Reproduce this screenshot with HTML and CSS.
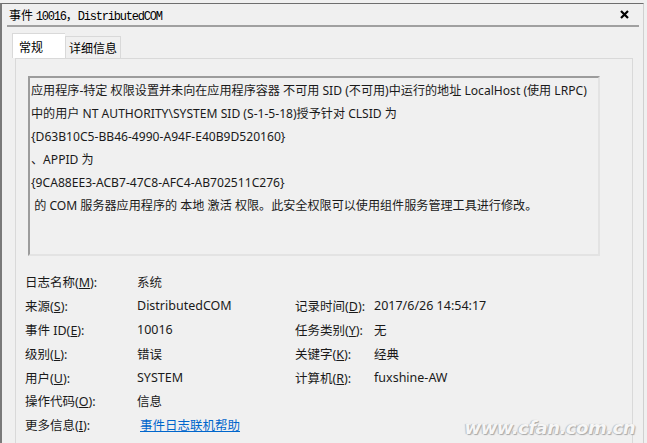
FILE: index.html
```html
<!DOCTYPE html>
<html>
<head>
    <title>事件 10016，DistributedCOM</title>
    <link rel="stylesheet" href="styles.css">
</head>
<body>
    <div class="window">
        <div class="title-bar">
            <span class="title">事件 <span class="mono">10016</span>，<span class="mono">DistributedCOM</span></span>
            <svg class="close" width="9" height="9" viewBox="0 0 9 9">
                <path d="M1 1 L8 8 M8 1 L1 8" stroke="#000" stroke-width="2.2"/>
            </svg>
        </div>
        <div class="title-line"></div>

        <div class="tabs">
            <div class="tab active">常规</div>
            <div class="tab">详细信息</div>
        </div>

        <div class="panel">
            <div class="message">
                <p>应用程序-特定 权限设置并未向在应用程序容器 不可用 SID (不可用)中运行的地址 LocalHost (使用 LRPC)<br>中的用户 NT AUTHORITY\SYSTEM SID (S-1-5-18)授予针对 CLSID 为 </p>
                <p>{D63B10C5-BB46-4990-A94F-E40B9D520160}</p>
                <p>、APPID 为 </p>
                <p>{9CA88EE3-ACB7-47C8-AFC4-AB702511C276}</p>
                <p>&nbsp;的 COM 服务器应用程序的 本地 激活 权限。此安全权限可以使用组件服务管理工具进行修改。</p>
            </div>

            <div class="fields">
                <span>日志名称(<u>M</u>):</span><span>系统</span><span></span><span></span>
                <span>来源(<u>S</u>):</span><span>DistributedCOM</span><span>记录时间(<u>D</u>):</span><span>2017/6/26 14:54:17</span>
                <span>事件 ID(<u>E</u>):</span><span>10016</span><span>任务类别(<u>Y</u>):</span><span>无</span>
                <span>级别(<u>L</u>):</span><span>错误</span><span>关键字(<u>K</u>):</span><span>经典</span>
                <span>用户(<u>U</u>):</span><span>SYSTEM</span><span>计算机(<u>R</u>):</span><span>fuxshine-AW</span>
                <span>操作代码(<u>O</u>):</span><span>信息</span><span></span><span></span>
                <span>更多信息(<u>I</u>):</span><span><a href="#" class="help-link">事件日志联机帮助</a></span><span></span><span></span>
            </div>
        </div>

        <div class="watermark">www.cfan.com.cn</div>
    </div>
</body>
</html>
```

FILE: styles.css
```css
body {
    margin: 0;
    background-color: #f0f0f0;
    font-family: "Noto Sans", "Noto Sans CJK SC", sans-serif;
    font-size: 12px;
    color: #1a1a1a;
}

.window {
    position: relative;
    height: 440px;
    margin-top: 3px;
    width: 641px;
    border-top: 1px solid #6e6e6e;
    border-left: 2px solid #7a7a7a;
    border-right: 1px solid #d0d0d0;
    overflow: hidden;
}

.title-bar {
    height: 21px;
    display: flex;
    align-items: center;
    justify-content: space-between;
    padding: 0 14px 0 7px;
}

.title {
    font-family: "Noto Sans CJK SC", sans-serif;
    font-size: 12px;
    color: #000;
}

.mono {
    font-family: "Liberation Mono", monospace;
    letter-spacing: -1.2px;
}

.title-line {
    height: 2px;
    margin: 0 4px 0 5px;
    background-color: #a0a0a0;
}

.tabs {
    display: flex;
    align-items: flex-end;
    margin: 7px 0 0 10px;
    height: 24px;
}

.tab {
    height: 21px;
    padding: 0 3px 0 3px;
    border: 1px solid #d9d9d9;
    border-bottom: none;
    font-family: "Noto Sans CJK SC", sans-serif;
    font-size: 12px;
    line-height: 21px;
    color: #000;
}

.tab.active {
    height: 24px;
    width: 43px;
    padding-left: 6px;
    line-height: 25px;
    background-color: #fff;
    border-right: none;
}

.panel {
    margin-left: 13px;
    width: 618px;
    height: 400px;
    border: 1px solid #d9d9d9;
    border-bottom: none;
    padding: 17px 0 0 12px;
    box-sizing: border-box;
}

.message {
    border-style: solid;
    border-width: 2px;
    border-color: #9c9c9c #e3e3e3 #e3e3e3 #9c9c9c;
    padding: 1px 0 0 1px;
    box-sizing: border-box;
    width: 572px;
    height: 180px;
    font-size: 12.1px;
    line-height: 23px;
    color: #1a1a1a;
    white-space: nowrap;
}

.message p {
    margin: 0;
}

.fields {
    display: grid;
    grid-template-columns: 112px 158px 79px auto;
    grid-auto-rows: 23.8px;
    align-items: center;
    margin: 14px 0 0 -3px;
    font-size: 12.5px;
}

.help-link {
    margin-left: 3px;
    color: #0066cc;
    text-decoration: underline;
}

.watermark {
    position: absolute;
    right: 8px;
    bottom: 6px;
    font-family: "DejaVu Sans", sans-serif;
    font-size: 18px;
    font-weight: bold;
    font-style: italic;
    letter-spacing: -0.5px;
    color: #f6f6f6;
    text-shadow: 1px 1px 1px #a8a8a8, -1px 0 1px #bcbcbc;
}
```
